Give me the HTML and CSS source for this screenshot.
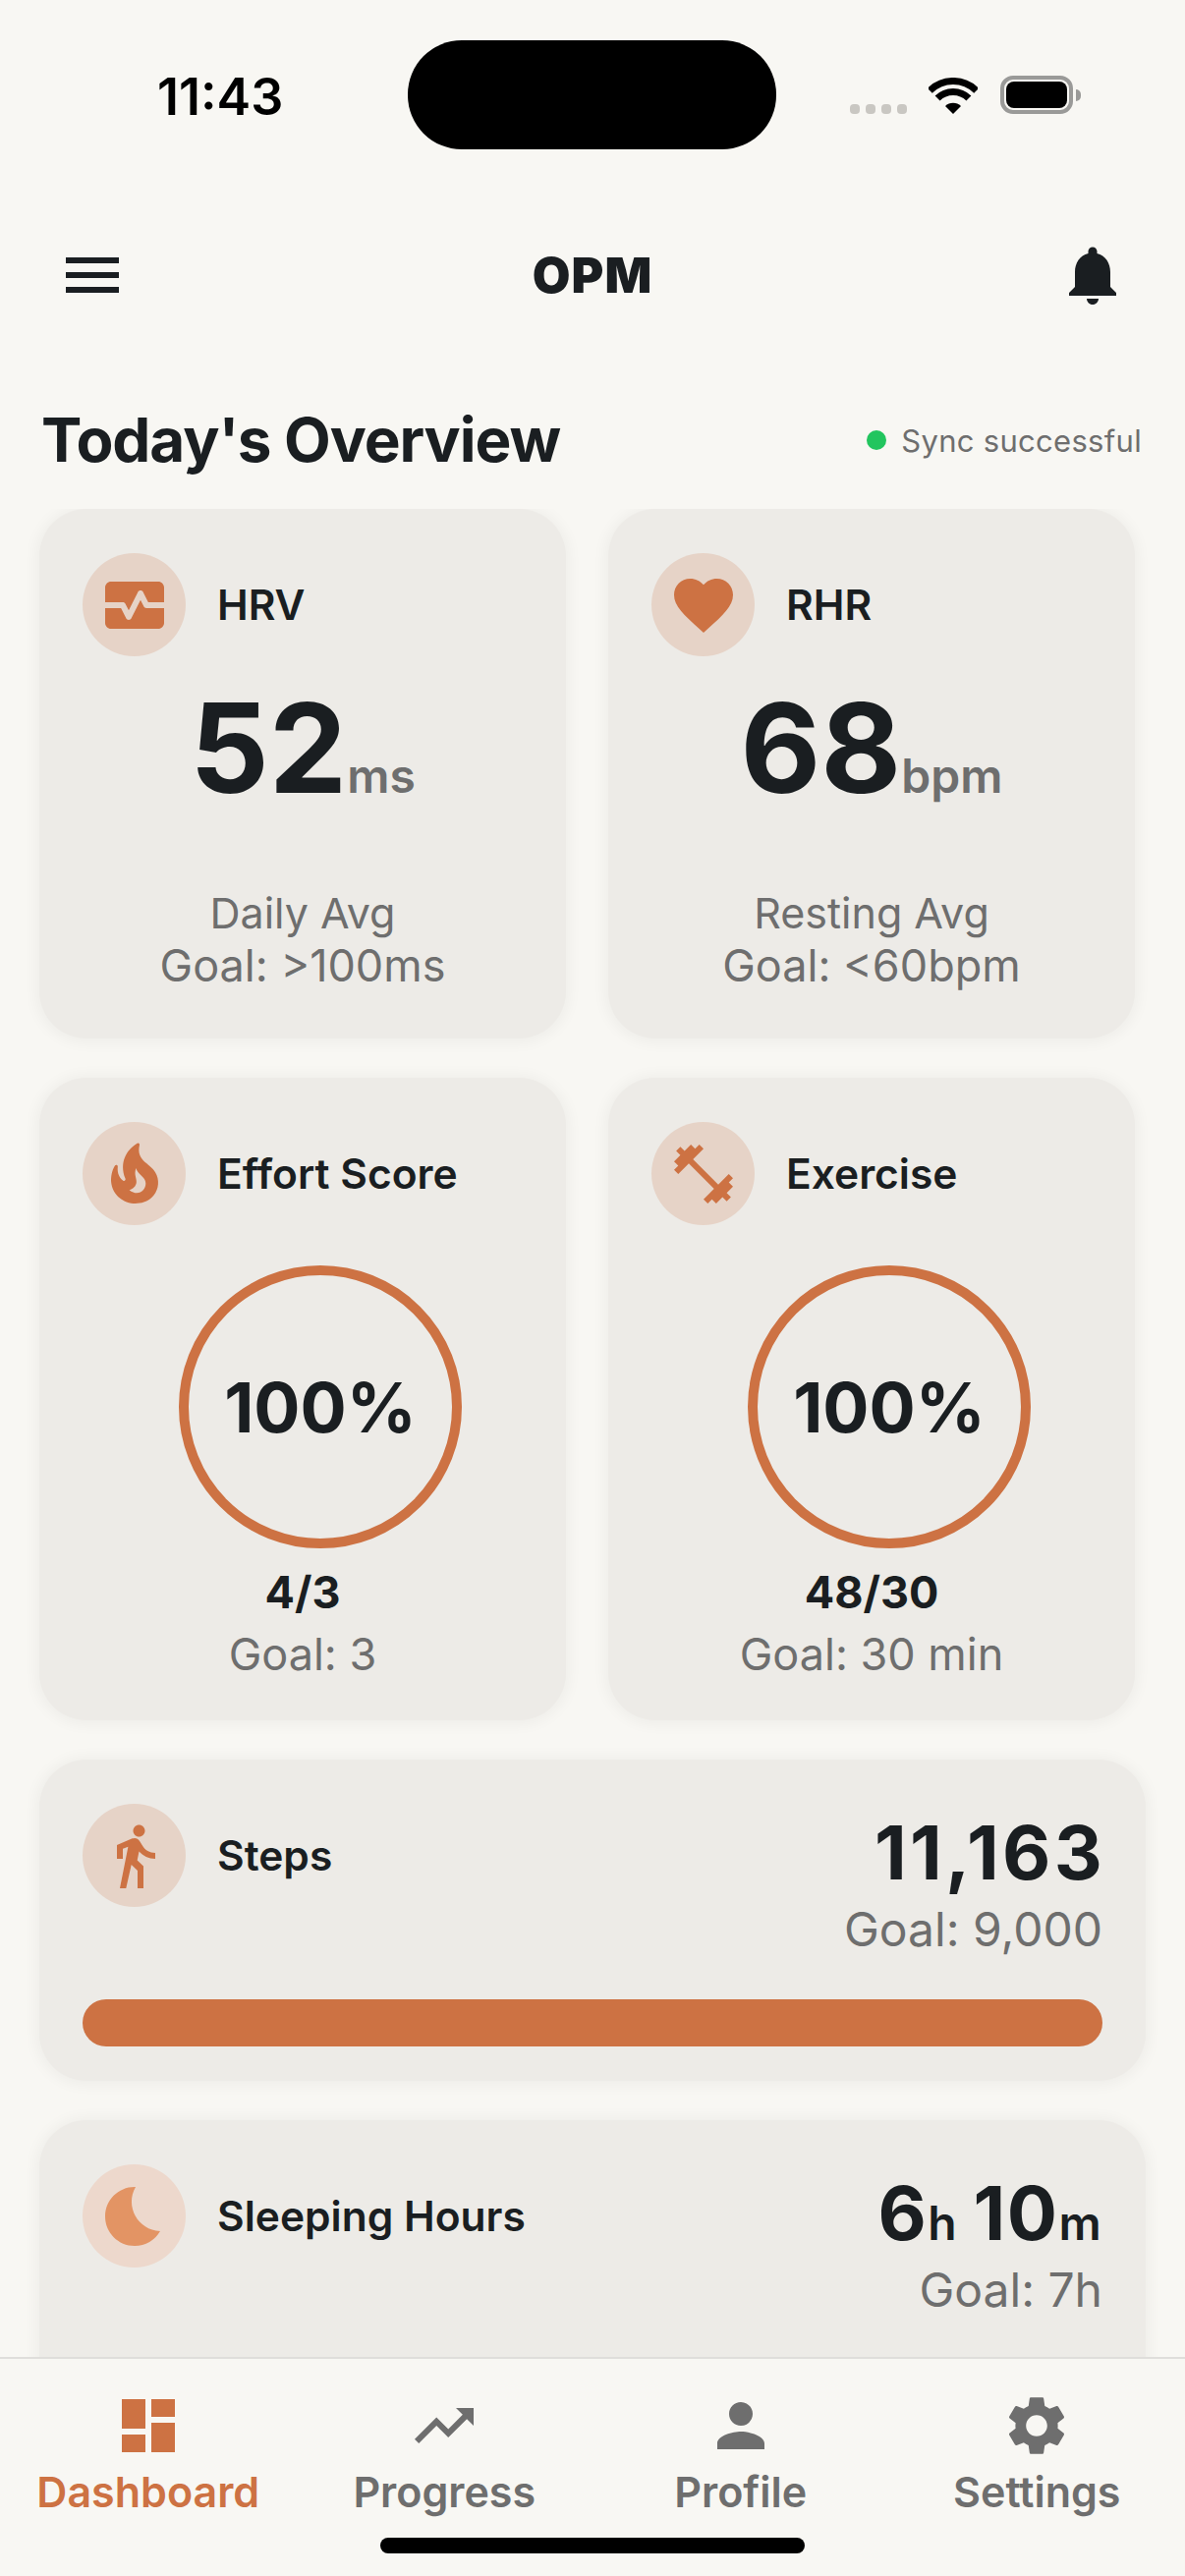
FILE: index.html
```html
<!DOCTYPE html>
<html lang="en">
<head>
  <meta charset="UTF-8" />
  <title>OPM</title>
  <link rel="stylesheet" href="styles.css">
</head>
<body>

<div class="screen">

  <!-- status bar -->
  <div class="statusBar">
    <div class="time">11:43</div>
    <div class="island"></div>
    <div class="signals">
      <div class="dots"><span></span><span></span><span></span><span></span></div>
      <svg class="wifi" viewBox="0 0 50 37">
        <path d="M1.3 13.3A33.5 33.5 0 0 1 48.7 13.3" fill="none" stroke="#000" stroke-width="7"/>
        <path d="M9.1 21.1A22.5 22.5 0 0 1 40.9 21.1" fill="none" stroke="#000" stroke-width="7"/>
        <path d="M25 37L17 29A11.5 11.5 0 0 1 33 29Z" fill="#000"/>
      </svg>
      <div class="battery"><div class="batteryFill"></div></div>
      <div class="batteryNub"></div>
    </div>
  </div>

  <!-- top bar -->
  <div class="topBar">
    <svg class="icon72" viewBox="0 0 24 24" fill="#1a1e21"><path d="M3 18h18v-2H3v2zm0-5h18v-2H3v2zm0-7v2h18V6H3z"/></svg>
    <div class="appName">OPM</div>
    <svg class="icon72" viewBox="0 0 24 24" fill="#1a1e21"><path d="M12 22c1.1 0 2-.9 2-2h-4c0 1.1.89 2 2 2zm6-6v-5c0-3.07-1.64-5.64-4.5-6.32V4c0-.83-.67-1.5-1.5-1.5s-1.5.67-1.5 1.5v.68C7.63 5.36 6 7.92 6 11v5l-2 2v1h16v-1l-2-2z"/></svg>
  </div>

  <div class="titleRow">
    <h1>Today's Overview</h1>
    <div class="sync"><span class="syncDot"></span>Sync successful</div>
  </div>

  <div class="content">
    <div class="cardGrid">

      <div class="card card1">
        <div class="cardHead">
          <div class="iconCircle">
            <svg class="icon72" viewBox="0 0 24 24" fill="#cd7243"><path d="M15.11 12.45L14 10.24l-3.11 6.21c-.16.34-.51.55-.89.55s-.73-.21-.89-.55L7.38 13H2v5c0 1.1.9 2 2 2h16c1.1 0 2-.9 2-2v-5h-6c-.38 0-.73-.21-.89-.55z"/><path d="M20 4H4c-1.1 0-2 .9-2 2v5h6c.38 0 .73.21.89.55L10 13.76l3.11-6.21c.34-.68 1.45-.68 1.79 0L16.62 11H22V6c0-1.1-.9-2-2-2z"/></svg>
          </div>
          <div class="cardLabel">HRV</div>
        </div>
        <div class="bigValue">52<span class="unit">ms</span></div>
        <div class="subText subFirst">Daily Avg</div>
        <div class="subText">Goal: &gt;100ms</div>
      </div>

      <div class="card card1">
        <div class="cardHead">
          <div class="iconCircle">
            <svg class="icon72" viewBox="0 0 24 24" fill="#cd7243"><path d="M12 21.35l-1.45-1.32C5.4 15.36 2 12.28 2 8.5 2 5.42 4.42 3 7.5 3c1.74 0 3.41.81 4.5 2.09C13.09 3.81 14.76 3 16.5 3 19.58 3 22 5.42 22 8.5c0 3.78-3.4 6.86-8.55 11.54L12 21.35z"/></svg>
          </div>
          <div class="cardLabel">RHR</div>
        </div>
        <div class="bigValue">68<span class="unit">bpm</span></div>
        <div class="subText subFirst">Resting Avg</div>
        <div class="subText">Goal: &lt;60bpm</div>
      </div>

      <div class="card card2">
        <div class="cardHead">
          <div class="iconCircle">
            <svg class="icon72" viewBox="0 0 24 24" fill="#cd7243"><path d="M19.48 12.35c-1.57-4.08-7.16-4.3-5.81-10.23.1-.44-.37-.78-.75-.55C9.29 3.71 6.68 8 8.87 13.62c.18.46-.36.89-.75.59-1.81-1.37-2-3.34-1.84-4.75.06-.52-.62-.77-.91-.34C4.69 10.16 4 11.84 4 14.37c.38 5.6 5.11 7.32 6.81 7.54 2.43.31 5.06-.14 6.95-1.87 2.08-1.93 2.84-5.01 1.72-7.69zm-9.28 5.03c1.44-.35 2.18-1.39 2.38-2.31.33-1.43-.96-2.83-.09-5.09.33 1.87 3.27 3.04 3.27 5.08.08 2.53-2.66 4.7-5.56 2.32z"/></svg>
          </div>
          <div class="cardLabel">Effort Score</div>
        </div>
        <div class="ring">100%</div>
        <div class="ratio">4/3</div>
        <div class="subText ratioGoal">Goal: 3</div>
      </div>

      <div class="card card2">
        <div class="cardHead">
          <div class="iconCircle">
            <svg class="icon72" viewBox="0 0 24 24" fill="#cd7243"><path d="M20.57 14.86L22 13.43 20.57 12 17 15.57 8.43 7 12 3.43 10.57 2 9.14 3.43 7.71 2 5.57 4.14 4.14 2.71 2.71 4.14l1.43 1.43L2 7.71l1.43 1.43L2 10.57 3.43 12 7 8.43 15.57 17 12 20.57 13.43 22l1.43-1.43L16.29 22l2.14-2.14 1.43 1.43 1.43-1.43-1.43-1.43L22 16.29z"/></svg>
          </div>
          <div class="cardLabel">Exercise</div>
        </div>
        <div class="ring">100%</div>
        <div class="ratio">48/30</div>
        <div class="subText ratioGoal">Goal: 30 min</div>
      </div>

      <div class="card wide stepsCard">
        <div class="wideRow">
          <div class="cardHead">
            <div class="iconCircle">
              <svg class="icon72" viewBox="0 0 24 24" fill="#cd7243"><path d="M13.5 5.5c1.1 0 2-.9 2-2s-.9-2-2-2-2 .9-2 2 .9 2 2 2zM9.8 8.9L7 23h2.1l1.8-8 2.1 2v6h2v-7.5l-2.1-2 .6-3C14.8 12 16.8 13 19 13v-2c-1.9 0-3.5-1-4.3-2.4l-1-1.6c-.4-.6-1-1-1.7-1-.3 0-.5.1-.8.1L6 8.3V13h2V9.6l1.8-.7"/></svg>
            </div>
            <div class="cardLabel">Steps</div>
          </div>
          <div class="wideValue">
            <div class="midValue stepsValue">11,163</div>
            <div class="subText wideGoal">Goal: 9,000</div>
          </div>
        </div>
        <div class="bar"></div>
      </div>

      <div class="card wide sleepCard">
        <div class="wideRow">
          <div class="cardHead">
            <div class="iconCircle moonCircle">
              <svg class="icon72" viewBox="0 0 24 24" fill="#e39464"><path d="M12.34 2.02C6.59 1.82 2 6.42 2 12c0 5.52 4.48 10 10 10 3.71 0 6.93-2.02 8.66-5.02-7.51-.25-12.09-8.43-8.32-14.96z"/></svg>
            </div>
            <div class="cardLabel">Sleeping Hours</div>
          </div>
          <div class="wideValue">
            <div class="midValue sleepValue">6<span class="midUnit">h</span> 10<span class="midUnit">m</span></div>
            <div class="subText wideGoal">Goal: 7h</div>
          </div>
        </div>
      </div>

    </div>
  </div>

  <!-- bottom tabs -->
  <div class="tabBar">
    <div class="tabs">
      <div class="tab active">
        <svg class="icon72" viewBox="0 0 24 24" fill="currentColor"><path d="M3 13h8V3H3v10zm0 8h8v-6H3v6zm10 0h8V11h-8v10zm0-18v6h8V3h-8z"/></svg>
        <span>Dashboard</span>
      </div>
      <div class="tab">
        <svg class="icon72" viewBox="0 0 24 24" fill="currentColor"><path d="M16 6l2.29 2.29-4.88 4.88-4-4L2 16.59 3.41 18l6-6 4 4 6.3-6.29L22 12V6z"/></svg>
        <span>Progress</span>
      </div>
      <div class="tab">
        <svg class="icon72" viewBox="0 0 24 24" fill="currentColor"><path d="M12 12c2.21 0 4-1.79 4-4s-1.79-4-4-4-4 1.79-4 4 1.79 4 4 4zm0 2c-2.67 0-8 1.34-8 4v2h16v-2c0-2.66-5.33-4-8-4z"/></svg>
        <span>Profile</span>
      </div>
      <div class="tab">
        <svg class="icon72" viewBox="0 0 24 24" fill="currentColor"><path d="M19.14 12.94c.04-.3.06-.61.06-.94 0-.32-.02-.64-.07-.94l2.03-1.58c.18-.14.23-.41.12-.61l-1.92-3.32c-.12-.22-.37-.29-.59-.22l-2.39.96c-.5-.38-1.03-.7-1.62-.94l-.36-2.54c-.04-.24-.24-.41-.48-.41h-3.84c-.24 0-.43.17-.47.41l-.36 2.54c-.59.24-1.13.57-1.62.94l-2.39-.96c-.22-.08-.47 0-.59.22L2.74 8.87c-.12.21-.08.47.12.61l2.03 1.58c-.05.3-.09.63-.09.94s.02.64.07.94l-2.03 1.58c-.18.14-.23.41-.12.61l1.92 3.32c.12.22.37.29.59.22l2.39-.96c.5.38 1.03.7 1.62.94l.36 2.54c.05.24.24.41.48.41h3.84c.24 0 .44-.17.47-.41l.36-2.54c.59-.24 1.13-.56 1.62-.94l2.39.96c.22.08.47 0 .59-.22l1.92-3.32c.12-.22.07-.47-.12-.61l-2.01-1.58zM12 15.6c-1.98 0-3.6-1.62-3.6-3.6s1.62-3.6 3.6-3.6 3.6 1.62 3.6 3.6-1.62 3.6-3.6 3.6z"/></svg>
        <span>Settings</span>
      </div>
    </div>
    <div class="homeBar"></div>
  </div>

</div>

</body>
</html>
```

FILE: styles.css
```css
html, body {
  margin: 0;
  padding: 0;
  background: #f8f7f3;
  font-family: Inter, "Noto Sans", sans-serif;
  color: #1a1e21;
}

.screen {
  width: 1206px;
  height: 2622px;
  display: flex;
  flex-direction: column;
  overflow: hidden;
}

.icon72 {
  width: 72px;
  height: 72px;
  display: block;
  flex: none;
}

/* status bar */
.statusBar {
  display: grid;
  grid-template-columns: 415px 375px 1fr;
  align-items: center;
  margin-top: 41px;
  height: 111px;
}

.time {
  padding: 3px 0 0 160px;
  font-size: 52px;
  font-weight: 600;
  color: #000;
}

.island {
  height: 111px;
  background: #000;
  border-radius: 55px;
}

.signals {
  display: flex;
  align-items: flex-end;
  padding-left: 75px;
  height: 39px;
}

.dots {
  display: flex;
  gap: 6px;
  margin-right: 22px;
}

.dots span {
  width: 10px;
  height: 10px;
  border-radius: 4px;
  background: #c9c7c2;
}

.wifi {
  width: 50px;
  height: 37px;
  margin-right: 23px;
}

.battery {
  box-sizing: border-box;
  width: 74px;
  height: 39px;
  border: 4px solid #9a9a98;
  border-radius: 13px;
  padding: 2px;
}

.batteryFill {
  height: 100%;
  background: #000;
  border-radius: 8px;
}

.batteryNub {
  width: 5px;
  height: 12px;
  margin: 0 0 13px 3px;
  background: #9a9a98;
  border-radius: 0 6px 6px 0;
}

/* top bar */
.topBar {
  display: flex;
  justify-content: space-between;
  align-items: center;
  margin-top: 92px;
  padding: 0 58px;
}

.appName {
  font-size: 50px;
  font-weight: 900;
  letter-spacing: 1px;
}

.titleRow {
  display: flex;
  justify-content: space-between;
  align-items: center;
  margin-top: 97px;
  padding: 0 44px 0 42px;
}

h1 {
  margin: 0;
  font-size: 62px;
  line-height: 70px;
  font-weight: 700;
  letter-spacing: -1.1px;
}

.sync {
  display: flex;
  align-items: center;
  gap: 15px;
  font-size: 31px;
  letter-spacing: 0.3px;
  color: #6e6e6e;
}

.syncDot {
  width: 20px;
  height: 20px;
  border-radius: 50%;
  background: #22c55e;
}

/* cards */
.content {
  flex: 1;
  overflow: hidden;
  margin-top: 35px;
}

.cardGrid {
  display: grid;
  grid-template-columns: 536px 536px;
  column-gap: 43px;
  row-gap: 40px;
  padding: 0 40px;
}

.card {
  box-sizing: border-box;
  padding: 45px 44px;
  background: #edebe7;
  border-radius: 48px;
  box-shadow: 0 1px 14px 4px rgba(0, 0, 0, 0.04);
  text-align: center;
}

.card1 {
  height: 539px;
}

.card2 {
  height: 654px;
}

.wide {
  grid-column: span 2;
  width: 1126px;
}

.stepsCard {
  height: 327px;
}

.sleepCard {
  height: 400px;
}

.cardHead {
  display: flex;
  align-items: center;
  gap: 32px;
}

.iconCircle {
  width: 105px;
  height: 105px;
  border-radius: 50%;
  background: #e6d3c7;
  display: flex;
  align-items: center;
  justify-content: center;
  flex: none;
}

.moonCircle {
  background: #edd8cc;
}

.cardLabel {
  font-size: 42.5px;
  font-weight: 600;
}

.bigValue {
  margin-top: 30px;
  font-size: 126px;
  line-height: 126px;
  font-weight: 700;
}

.unit {
  font-size: 48px;
  line-height: 1;
  font-weight: 600;
  color: #6e6e6e;
}

.subText {
  font-size: 45px;
  line-height: 53px;
  color: #6e6e6e;
}

.subFirst {
  margin-top: 79px;
  font-size: 43px;
}

.ring {
  box-sizing: border-box;
  width: 288px;
  height: 288px;
  margin: 41px auto 0;
  position: relative;
  left: 18px;
  border: 10px solid #cd7243;
  border-radius: 50%;
  display: flex;
  align-items: center;
  justify-content: center;
  font-size: 70px;
  font-weight: 700;
}

.ratio {
  margin-top: 18px;
  font-size: 45px;
  line-height: 54px;
  font-weight: 700;
}

.ratioGoal {
  margin-top: 9px;
}

.wideRow {
  display: flex;
  justify-content: space-between;
  align-items: flex-start;
}

.wideValue {
  text-align: right;
  margin-top: 11px;
}

.midValue {
  font-size: 76px;
  line-height: 76px;
  font-weight: 700;
  margin-bottom: 14px;
}

.stepsValue {
  letter-spacing: 3.3px;
  margin-right: -3px;
}

.sleepValue {
  letter-spacing: 1.4px;
  word-spacing: -4px;
}

.midUnit {
  font-size: 48px;
  line-height: 1;
  font-weight: 600;
}

.wideGoal {
  font-size: 48px;
}

.bar {
  height: 48px;
  margin-top: 45px;
  border-radius: 24px;
  background: #cd7243;
}

/* tabs */
.tabBar {
  flex: none;
  height: 223px;
  box-sizing: border-box;
  border-top: 2px solid #dfdedb;
  background: #f8f7f3;
  display: flex;
  flex-direction: column;
  align-items: center;
  position: relative;
}

.tabs {
  align-self: stretch;
  display: grid;
  grid-template-columns: repeat(4, 1fr);
  padding-top: 32px;
}

.tab {
  display: flex;
  flex-direction: column;
  align-items: center;
  gap: 6px;
  font-size: 43px;
  line-height: 50px;
  font-weight: 600;
  color: #6e6e6e;
}

.tab.active {
  color: #cd7243;
}

.homeBar {
  width: 432px;
  height: 16px;
  margin-top: 22px;
  border-radius: 8px;
  background: #000;
}
```
